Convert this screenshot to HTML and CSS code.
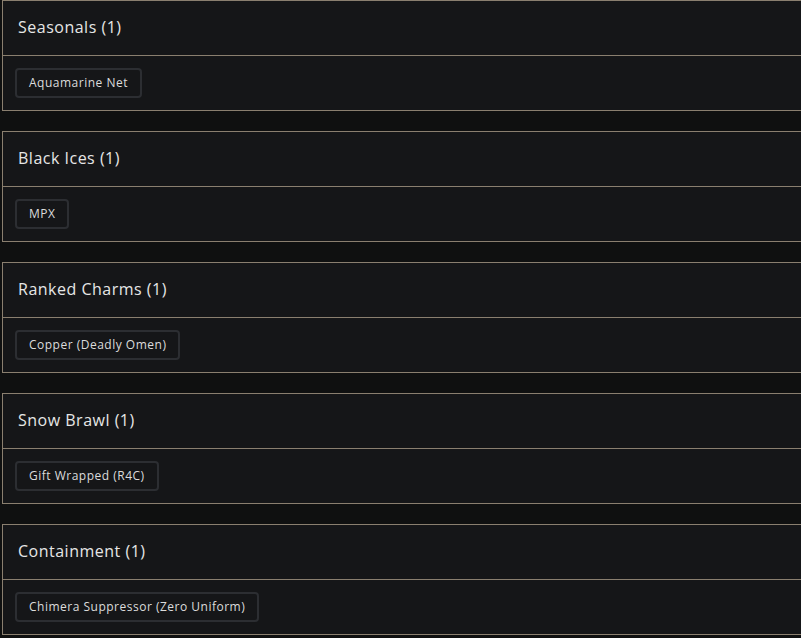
FILE: index.html
```html
<!DOCTYPE html>
<html>
<head>
<meta charset="utf-8">
<link rel="stylesheet" href="styles.css">
</head>
<body>
<div class="list">
  <section class="card">
    <div class="card-head"><h2 class="card-title">Seasonals (1)</h2></div>
    <div class="card-body"><span class="chip">Aquamarine Net</span></div>
  </section>
  <section class="card">
    <div class="card-head"><h2 class="card-title">Black Ices (1)</h2></div>
    <div class="card-body"><span class="chip">MPX</span></div>
  </section>
  <section class="card">
    <div class="card-head"><h2 class="card-title">Ranked Charms (1)</h2></div>
    <div class="card-body"><span class="chip">Copper (Deadly Omen)</span></div>
  </section>
  <section class="card">
    <div class="card-head"><h2 class="card-title">Snow Brawl (1)</h2></div>
    <div class="card-body"><span class="chip">Gift Wrapped (R4C)</span></div>
  </section>
  <section class="card">
    <div class="card-head"><h2 class="card-title">Containment (1)</h2></div>
    <div class="card-body"><span class="chip">Chimera Suppressor (Zero Uniform)</span></div>
  </section>
</div>
</body>
</html>
```

FILE: styles.css
```css
html, body {
  margin: 0;
  padding: 0;
  background: #0f1010;
  overflow: hidden;
  height: 100%;
}
body {
  font-family: "Open Sans", "Liberation Sans", sans-serif;
  color: #e4e4e4;
}
.list {
  display: flex;
  flex-direction: column;
  gap: 20px;
  padding-left: 2px;
  width: 830px;
}
.card {
  background: #151618;
  border: 1px solid #8a7f6f;
}
.card-head {
  height: 55px;
  box-sizing: border-box;
  display: flex;
  align-items: center;
  padding: 0 0 2px 15px;
  border-bottom: 1px solid #8a7f6f;
}
.card-title {
  margin: 0;
  font-size: 16px;
  font-weight: 500;
  letter-spacing: 0.5px;
  color: #e6e6e6;
}
.card-body {
  height: 54px;
  display: flex;
  align-items: center;
  padding-left: 12px;
}
.chip {
  display: inline-flex;
  align-items: center;
  box-sizing: border-box;
  height: 30px;
  padding: 0 12px 2px;
  border: 2px solid #2c2e32;
  border-radius: 4px;
  font-size: 12px;
  letter-spacing: 0.5px;
  color: #dcdcdc;
}
```
